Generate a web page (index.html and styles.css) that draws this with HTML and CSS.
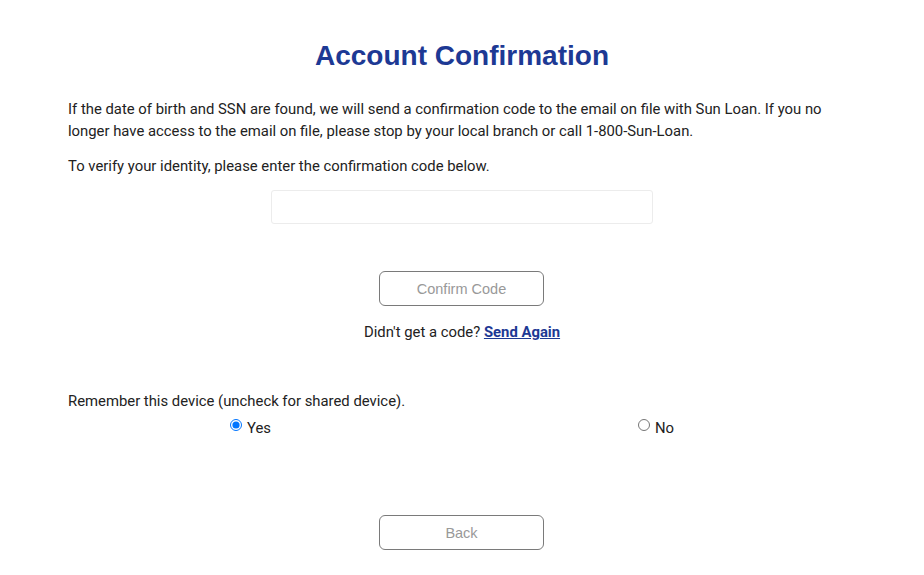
FILE: index.html
```html
<!DOCTYPE html>
<html lang="en">
<head>
<meta charset="utf-8">
<title>Account Confirmation</title>
<link rel="stylesheet" href="styles.css">
</head>
<body>
<main class="page">
  <h1 class="title">Account Confirmation</h1>
  <p class="text">If the date of birth and SSN are found, we will send a confirmation code to the email on file with Sun Loan. If you no longer have access to the email on file, please stop by your local branch or call 1-800-Sun-Loan.</p>
  <p class="text text-second">To verify your identity, please enter the confirmation code below.</p>
  <div class="field-row">
    <input class="code-input" type="text" aria-label="Confirmation code">
  </div>
  <div class="btn-row btn-row-confirm">
    <button class="btn" type="button">Confirm Code</button>
  </div>
  <p class="resend">Didn't get a code? <a class="resend-link" href="#">Send Again</a></p>
  <p class="text remember">Remember this device (uncheck for shared device).</p>
  <div class="radio-row">
    <label class="radio-opt"><input type="radio" name="remember" checked><span>Yes</span></label>
    <label class="radio-opt"><input type="radio" name="remember"><span>No</span></label>
  </div>
  <div class="btn-row btn-row-back">
    <button class="btn" type="button">Back</button>
  </div>
</main>
</body>
</html>
```

FILE: styles.css
```css
html, body {
  margin: 0;
  padding: 0;
  background: #ffffff;
}

body {
  font-family: Roboto, "Liberation Sans", Arial, sans-serif;
  color: #222222;
  font-size: 14.85px;
  line-height: 22px;
}

.page {
  width: 788px;
  margin: 0 auto;
  padding-top: 39px;
  display: flex;
  flex-direction: column;
}

.title {
  margin: 0 0 25px;
  text-align: center;
  font-family: "Liberation Sans", Arial, Helvetica, sans-serif;
  font-weight: 700;
  font-size: 28px;
  line-height: 34px;
  color: #1d3994;
}

.text {
  margin: 0;
}

.text-second {
  margin-top: 13px;
}

.field-row {
  display: flex;
  justify-content: center;
  margin-top: 13px;
}

.code-input {
  box-sizing: border-box;
  width: 382px;
  height: 34px;
  border: 1px solid #ececec;
  border-radius: 3px;
  background: #fff;
  outline: none;
}

.btn-row {
  display: flex;
  justify-content: center;
  padding-right: 1px;
}

.btn-row-confirm {
  margin-top: 47px;
}

.btn {
  box-sizing: border-box;
  width: 165px;
  height: 35px;
  border: 1px solid #7a7a7a;
  border-radius: 6px;
  background: #ffffff;
  color: #999999;
  font-family: "Liberation Sans", Arial, Helvetica, sans-serif;
  font-size: 14.5px;
  padding: 0;
}

.resend {
  margin: 15px 0 0;
  text-align: center;
}

.resend-link {
  color: #1d3994;
  font-weight: 700;
  text-decoration: underline;
}

.remember {
  margin-top: 47px;
}

.radio-row {
  display: flex;
  gap: 367px;
  padding-left: 162px;
  margin-top: 5px;
}

.radio-opt {
  display: flex;
  align-items: center;
  gap: 5px;
}

.radio-opt input {
  margin: 0;
  width: 12px;
  height: 12px;
  position: relative;
  top: -3px;
}

.btn-row-back {
  margin-top: 76px;
}
```
